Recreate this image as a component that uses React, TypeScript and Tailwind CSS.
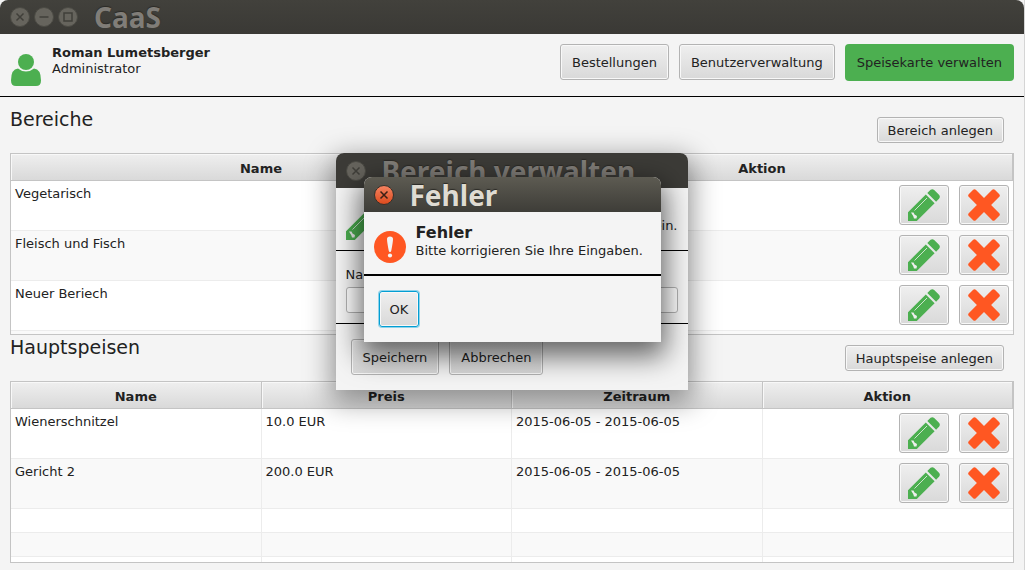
import type { ReactNode } from "react";

function PencilIcon() {
  return (
    <svg viewBox="0 0 32 32" className="size-8 shrink-0" aria-hidden="true">
      <path fill="#4caf50" d="M17.800 5.400 26.600 14.200 8.800 32H0V23.200Z M19.300 3.900 22.600.8Q24.400-.6 26.200 1L31 5.800Q32.600 7.600 31.200 9.400L28.100 12.700Z" />
      <path d="M6.500 21.500 19 9" stroke="#dcebdc" strokeWidth="0.900" fill="none" />
      <path d="M3 23.500 5.500 23.500 6.500 25.500 9 27 8.500 29.500 6 29.500 5.200 27Z" fill="#eeeeee" />
    </svg>
  );
}

function CrossIcon() {
  return (
    <svg viewBox="0 0 32 32" className="size-8 shrink-0" aria-hidden="true">
      <path
        fill="#ff5722"
        d="M5.200.7Q6.500-.4 7.800.8L16 9 24.200.8Q25.500-.4 26.800.7L31.300 5.200Q32.400 6.500 31.300 7.800L23.100 16 31.300 24.200Q32.400 25.500 31.300 26.800L26.800 31.300Q25.500 32.400 24.200 31.300L16 23.100 7.800 31.300Q6.500 32.400 5.200 31.300L.7 26.800Q-.4 25.500.7 24.200L8.900 16 .7 7.800Q-.4 6.500.7 5.200Z"
      />
    </svg>
  );
}

function UserIcon() {
  return (
    <svg viewBox="0 0 32 34" className="h-[34px] w-8 shrink-0" aria-hidden="true">
      <circle cx="16" cy="9" r="8" fill="#4caf50" />
      <path fill="#4caf50" d="M8 15.500Q11.500 18.500 16 18.500T24 15.500Q31 16 31 27.500Q31 33 26 33H6Q1 33 1 27.500Q1 16 8 15.500Z" />
    </svg>
  );
}

function AlertIcon() {
  return (
    <svg viewBox="0 0 32 32" className="size-8 shrink-0" aria-hidden="true">
      <circle cx="16" cy="16" r="16" fill="#ff5722" />
      <path fill="#f4f4f4" d="M13 8Q13 5.500 16 5.500T19 8Q19 11 17.300 19.500Q17.100 21 16 21T14.700 19.500Q13 11 13 8Z" />
      <circle cx="16" cy="24.500" r="2.100" fill="#f4f4f4" />
    </svg>
  );
}

type ControlKind = "close" | "minimize" | "maximize";

function WindowControl({ kind, label, active }: { kind: ControlKind; label: string; active?: boolean }) {
  return (
    <button type="button" aria-label={label} className="size-5 shrink-0">
      <svg viewBox="0 0 20 20" className="size-5" aria-hidden="true">
        <defs>
          <linearGradient id="active-close" x1="0" y1="0" x2="0" y2="1">
            <stop offset="0" stopColor="#f58462" />
            <stop offset="1" stopColor="#dd4a1c" />
          </linearGradient>
        </defs>
        <circle cx="10" cy="10" r="9.500" fill={active ? "url(#active-close)" : "#66645d"} stroke={active ? "#33302a" : "#4b4a44"} />
        <g stroke={active ? "#3a2016" : "#403f3a"} strokeWidth="1.500" fill="none">
          {kind === "close" && <path d="M6.500 6.500 13.500 13.500M13.500 6.500 6.500 13.500" />}
          {kind === "minimize" && <path d="M5.500 10H14.500" />}
          {kind === "maximize" && <path d="M6 6H14V14H6Z" />}
        </g>
      </svg>
    </button>
  );
}

function TitleText({ children, active }: { children: ReactNode; active?: boolean }) {
  return (
    <span
      className={
        active
          ? "font-['Noto_Sans',sans-serif] text-[28px] leading-[34px] font-bold whitespace-nowrap text-[#dfdbd2] [text-shadow:0_-1px_1px_#2b2a26]"
          : "font-['Noto_Sans',sans-serif] text-[28px] leading-[34px] font-bold whitespace-nowrap text-[#807d78] [text-shadow:0_-1px_1px_#2b2a26]"
      }
    >
      {children}
    </span>
  );
}

const raised = "rounded-[3px] border border-[#b3b3b3] bg-linear-to-b from-[#efefef] to-[#d9d9d9] shadow-[inset_0_0_0_1px_#f8f8f8] whitespace-nowrap";

function Button({ children, size = "large" }: { children: ReactNode; size?: "large" | "small" }) {
  return (
    <button type="button" className={size === "large" ? `${raised} h-9 px-[11px] pt-0.5` : `${raised} h-[26px] px-2.5 pt-0.5`}>
      {children}
    </button>
  );
}

function RowActions({ name }: { name: string }) {
  return (
    <div className="flex justify-end gap-2.5 pt-1 pr-1">
      <button type="button" aria-label={`${name} bearbeiten`} className={`${raised} flex h-10 w-[50px] items-center justify-center`}>
        <PencilIcon />
      </button>
      <button type="button" aria-label={`${name} entfernen`} className={`${raised} flex h-10 w-[50px] items-center justify-center`}>
        <CrossIcon />
      </button>
    </div>
  );
}

function DataTable({ label, columns, rows, fillers }: { label: string; columns: string[]; rows: string[][]; fillers: number }) {
  const split = columns.length > 2;
  const cell = split
    ? "border-b border-[#ececec] border-r last:border-r-0 p-0 align-top"
    : "border-b border-[#ececec] p-0 align-top";
  return (
    <div className="h-[182px] overflow-hidden border border-[#c4c4c4] bg-white">
      <table aria-label={label} className="w-full table-fixed border-separate border-spacing-0">
        <thead>
          <tr>
            {columns.map((c) => (
              <th
                key={c}
                className="h-[27px] border-r border-b border-[#c4c4c4] bg-linear-to-b from-[#efefef] to-[#d9d9d9] p-0 pt-1 font-bold shadow-[inset_1px_1px_0_#f8f8f8]"
              >
                {c}
              </th>
            ))}
          </tr>
        </thead>
        <tbody>
          {rows.map((row) => (
            <tr key={row[0]} className="h-[50px] even:bg-[#f9f9f9]">
              {row.map((value, i) => (
                <td key={i} className={cell}>
                  <div className="px-1 pt-[5px]">{value}</div>
                </td>
              ))}
              <td className={cell}>
                <RowActions name={row[0]} />
              </td>
            </tr>
          ))}
          {Array.from({ length: fillers }, (_, n) => (
            <tr key={n} className="h-6 even:bg-[#f9f9f9]">
              {columns.map((c) => (
                <td key={c} className={cell} />
              ))}
            </tr>
          ))}
        </tbody>
      </table>
    </div>
  );
}

function EditDialog() {
  return (
    <div className="absolute inset-x-0 top-[153px] flex justify-center pr-px">
      <section role="dialog" aria-label="Bereich verwalten" className="w-[352px] rounded-t-lg bg-[#f4f4f4] shadow-[0_8px_28px_4px_rgba(0,0,0,0.4)]">
        <div className="flex h-[35px] items-center gap-4 rounded-t-lg bg-[#3c3b37] px-2.5">
          <WindowControl kind="close" label="Schließen" />
          <TitleText>Bereich verwalten</TitleText>
        </div>
        <div className="flex h-[63px] items-center justify-between border-b border-black px-2.5 pt-2.5">
          <PencilIcon />
          <p className="pt-1">Bitte geben Sie die Daten ein.</p>
        </div>
        <div className="flex h-[73px] flex-col gap-1 border-b border-black px-2.5 pt-4">
          <label htmlFor="bereich-name">Name</label>
          <input id="bereich-name" type="text" className="h-[26px] w-full rounded-[3px] border border-[#b3b3b3] bg-white px-2" />
        </div>
        <div className="flex h-[66px] gap-2.5 px-[15px] pt-[15px]">
          <Button>Speichern</Button>
          <Button>Abbrechen</Button>
        </div>
      </section>
    </div>
  );
}

function ErrorDialog() {
  return (
    <div className="absolute inset-x-0 top-[177px] flex justify-center">
      <section role="alertdialog" aria-label="Fehler" className="w-[297px] rounded-t-lg bg-[#f4f4f4] shadow-[0_10px_28px_4px_rgba(0,0,0,0.6)]">
        <div className="flex h-[35px] items-center gap-4 rounded-t-lg bg-linear-to-b from-[#5d5b52] to-[#3e3d38] px-2.5">
          <WindowControl kind="close" label="Schließen" active />
          <TitleText active>Fehler</TitleText>
        </div>
        <div className="flex h-16 gap-2.5 border-b-2 border-black px-2.5 pt-[11px]">
          <div className="pt-2">
            <AlertIcon />
          </div>
          <div>
            <h2 className="text-base leading-5 font-bold">Fehler</h2>
            <p className="whitespace-nowrap">Bitte korrigieren Sie Ihre Eingaben.</p>
          </div>
        </div>
        <div className="flex h-[66px] px-[15px] pt-[15px]">
          <button
            type="button"
            className="h-9 rounded-[3px] border border-[#039ed3] bg-linear-to-b from-[#efefef] to-[#d9d9d9] px-2.5 pt-0.5 shadow-[0_0_0_1px_#8fd3ea,inset_0_0_0_1px_#f8f8f8]"
          >
            OK
          </button>
        </div>
      </section>
    </div>
  );
}

export default function App() {
  return (
    <div className="relative min-h-screen border-r border-[#d5d5d5] bg-[#f4f4f4] font-['DejaVu_Sans',sans-serif] text-[13px] leading-4 text-[#222]">
      <header className="flex h-[34px] items-center gap-4 rounded-t-lg bg-linear-to-b from-[#42413c] to-[#3a3935] px-2.5">
        <div className="flex gap-1">
          <WindowControl kind="close" label="Schließen" />
          <WindowControl kind="minimize" label="Minimieren" />
          <WindowControl kind="maximize" label="Maximieren" />
        </div>
        <TitleText>CaaS</TitleText>
      </header>

      <div className="flex h-[63px] justify-between border-b border-black px-2.5">
        <div className="flex gap-2.5 pt-[11px]">
          <div className="pt-2">
            <UserIcon />
          </div>
          <div>
            <p className="font-bold">Roman Lumetsberger</p>
            <p>Administrator</p>
          </div>
        </div>
        <nav className="flex items-start gap-2.5 pt-2.5">
          <Button>Bestellungen</Button>
          <Button>Benutzerverwaltung</Button>
          <button type="button" aria-current="page" className="h-[37px] rounded bg-[#4caf50] px-3 whitespace-nowrap">
            Speisekarte verwalten
          </button>
        </nav>
      </div>

      <main className="px-2.5">
        <div className="flex h-14 items-start justify-between pr-2.5">
          <h1 className="pt-2.5 text-[19px] leading-6">Bereiche</h1>
          <div className="pt-5">
            <Button size="small">Bereich anlegen</Button>
          </div>
        </div>
        <DataTable
          label="Bereiche"
          columns={["Name", "Aktion"]}
          rows={[["Vegetarisch"], ["Fleisch und Fisch"], ["Neuer Beriech"]]}
          fillers={1}
        />
        <div className="flex h-[46px] items-start justify-between pr-2.5">
          <h1 className="text-[19px] leading-6">Hauptspeisen</h1>
          <div className="pt-2.5">
            <Button size="small">Hauptspeise anlegen</Button>
          </div>
        </div>
        <DataTable
          label="Hauptspeisen"
          columns={["Name", "Preis", "Zeitraum", "Aktion"]}
          rows={[
            ["Wienerschnitzel", "10.0 EUR", "2015-06-05 - 2015-06-05"],
            ["Gericht 2", "200.0 EUR", "2015-06-05 - 2015-06-05"],
          ]}
          fillers={3}
        />
      </main>

      <EditDialog />
      <ErrorDialog />
    </div>
  );
}
